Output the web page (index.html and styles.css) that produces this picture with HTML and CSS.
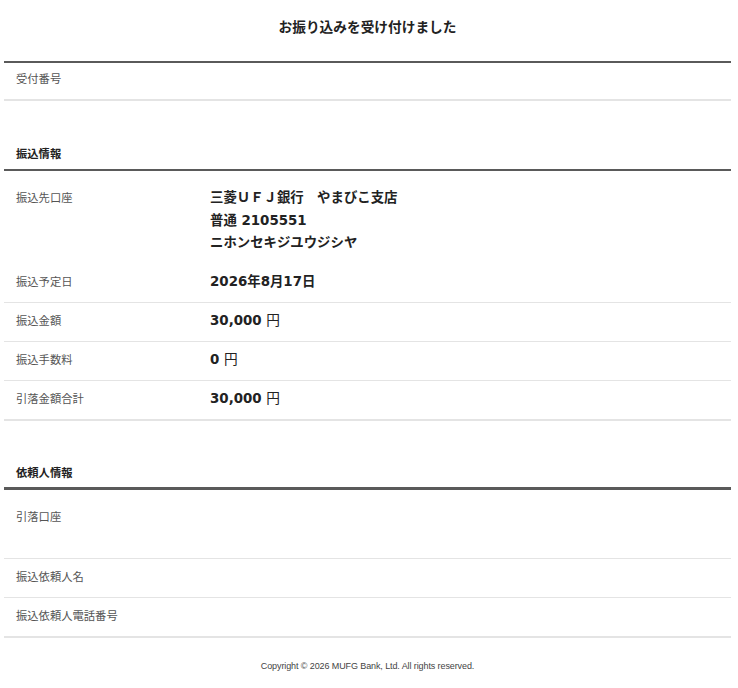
FILE: index.html
```html
<!DOCTYPE html>
<html lang="ja">
<head>
<meta charset="utf-8">
<title>お振り込みを受け付けました</title>
<link rel="stylesheet" href="styles.css">
</head>
<body>
<div class="page">
  <h1 class="title">お振り込みを受け付けました</h1>

  <section class="sec sec-first">
    <div class="row row-receipt row-last">
      <div class="label">受付番号</div>
      <div class="value"></div>
    </div>
  </section>

  <h2 class="sec-head">振込情報</h2>
  <section class="sec">
    <div class="row row-tall row-noline">
      <div class="label">振込先口座</div>
      <div class="value">三菱ＵＦＪ銀行　やまびこ支店<br>普通 2105551<br>ニホンセキジユウジシヤ</div>
    </div>
    <div class="row">
      <div class="label">振込予定日</div>
      <div class="value">2026年8月17日</div>
    </div>
    <div class="row">
      <div class="label">振込金額</div>
      <div class="value">30,000 <span class="yen">円</span></div>
    </div>
    <div class="row">
      <div class="label">振込手数料</div>
      <div class="value">0 <span class="yen">円</span></div>
    </div>
    <div class="row row-last">
      <div class="label">引落金額合計</div>
      <div class="value">30,000 <span class="yen">円</span></div>
    </div>
  </section>

  <h2 class="sec-head sec-head-thick">依頼人情報</h2>
  <section class="sec">
    <div class="row row-account">
      <div class="label">引落口座</div>
      <div class="value"></div>
    </div>
    <div class="row">
      <div class="label">振込依頼人名</div>
      <div class="value"></div>
    </div>
    <div class="row row-last">
      <div class="label">振込依頼人電話番号</div>
      <div class="value"></div>
    </div>
  </section>

  <footer class="footer">Copyright © 2026 MUFG Bank, Ltd. All rights reserved.</footer>
</div>
</body>
</html>
```

FILE: styles.css
```css
html, body {
  margin: 0;
  padding: 0;
  background: #ffffff;
}

body {
  font-family: "Noto Sans CJK JP", "Noto Sans", sans-serif;
  color: #333333;
}

.page {
  margin: 0 7px 0 4px;
}

.title {
  margin: 0;
  padding: 16px 0 25px;
  font-size: 13.7px;
  line-height: 20px;
  font-weight: bold;
  text-align: center;
  color: #222222;
}

.sec {
  border-top: 2px solid #5a5a5a;
}

.sec-head {
  margin: 42px 0 0;
  padding: 0 12px 6px;
  font-size: 11.3px;
  line-height: 20px;
  font-weight: bold;
  color: #222222;
}

.sec-head-thick {
  margin-top: 41px;
  padding-bottom: 5px;
}

.sec-head-thick + .sec {
  border-top-width: 3px;
}

.row {
  display: grid;
  grid-template-columns: 194px 1fr;
  padding: 7px 12px 9px;
  border-bottom: 1px solid #e4e4e4;
}

.row-last {
  border-bottom: 2px solid #e4e4e4;
}

.row-receipt {
  padding: 5px 12px 9px;
}

.row-tall {
  padding: 16px 12px 9px;
}

.row-tall .value {
  line-height: 22.5px;
}

.row-noline {
  border-bottom: none;
}

.row-account {
  padding: 16px 12px 30px;
}

.label {
  font-size: 11.3px;
  line-height: 20px;
  color: #555555;
}

.value {
  min-height: 22px;
  font-family: "DejaVu Sans", "Noto Sans CJK JP", sans-serif;
  font-size: 13.4px;
  line-height: 22px;
  font-weight: bold;
  color: #222222;
}

.yen {
  font-family: "Noto Sans CJK JP", sans-serif;
  font-weight: normal;
  font-size: 13.7px;
  line-height: 1;
}

.footer {
  padding: 21px 0 28px;
  text-align: center;
  font-family: "Liberation Sans", Arial, sans-serif;
  font-size: 9px;
  line-height: 14px;
  letter-spacing: -0.1px;
  color: #444444;
}
```
